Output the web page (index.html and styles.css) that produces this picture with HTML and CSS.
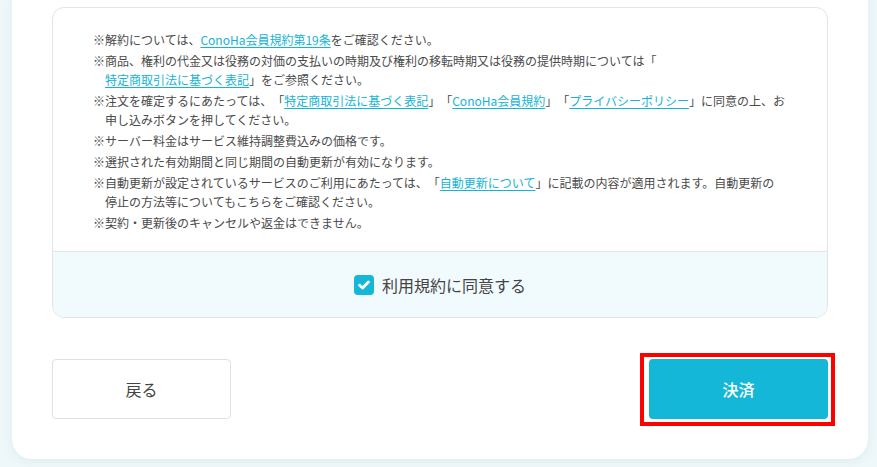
FILE: index.html
```html
<!DOCTYPE html>
<html lang="ja">
<head>
<meta charset="utf-8">
<link rel="stylesheet" href="styles.css">
</head>
<body>
<div class="page">
  <div class="card">
    <div class="terms">
      <ul class="notes">
        <li>※解約については、<a href="#">ConoHa会員規約第19条</a>をご確認ください。</li>
        <li>※商品、権利の代金又は役務の対価の支払いの時期及び権利の移転時期又は役務の提供時期については「<a class="nw" href="#">特定商取引法に基づく表記</a>」をご参照ください。</li>
        <li>※注文を確定するにあたっては、「<a href="#">特定商取引法に基づく表記</a>」「<a href="#">ConoHa会員規約</a>」「<a href="#">プライバシーポリシー</a>」に同意の上、お申し込みボタンを押してください。</li>
        <li>※サーバー料金はサービス維持調整費込みの価格です。</li>
        <li>※選択された有効期間と同じ期間の自動更新が有効になります。</li>
        <li>※自動更新が設定されているサービスのご利用にあたっては、「<a href="#">自動更新について</a>」に記載の内容が適用されます。自動更新の停止の方法等についてもこちらをご確認ください。</li>
        <li>※契約・更新後のキャンセルや返金はできません。</li>
      </ul>
      <div class="agree">
        <label class="check">
          <span class="box"><svg width="12" height="10" viewBox="0 0 12 10"><path d="M1.6 5.2 L4.6 8 L10.4 2" fill="none" stroke="#fff" stroke-width="2.8" stroke-linecap="round" stroke-linejoin="round"/></svg></span>
          <span class="label">利用規約に同意する</span>
        </label>
      </div>
    </div>
    <div class="actions">
      <button class="btn back">戻る</button>
      <button class="btn pay">決済<span class="mark"></span></button>
    </div>
  </div>
</div>
</body>
</html>
```

FILE: styles.css
```css
* { box-sizing: border-box; }
html, body { margin: 0; padding: 0; }
body {
  background: #eef7f9;
  font-family: "Noto Sans CJK JP", "Noto Sans", sans-serif;
  color: #4a4a4a;
  overflow: hidden;
  height: 467px;
  text-spacing-trim: space-all;
}
.page {
  padding: 0 9px 0 12px;
}
.card {
  margin-top: -20px;
  background: #fff;
  border-radius: 20px;
  padding: 27px 40px 40px;
  box-shadow: 0 2px 10px rgba(120, 180, 195, 0.15);
}
.terms {
  border: 1px solid #e2e4e6;
  border-radius: 12px;
  overflow: hidden;
}
.notes {
  list-style: none;
  margin: 0;
  padding: 22px 41px 19px 40px;
  font-size: 12px;
  line-height: 19px;
  line-break: loose;
}
.notes li {
  padding-left: 12px;
  text-indent: -12px;
  margin-bottom: 2px;
}
.notes li:last-child { margin-bottom: 0; }
.notes a {
  color: #14b4d6;
  text-decoration: underline;
  text-underline-offset: 2px;
}
.notes a.nw {
  display: inline-block;
  text-indent: 0;
}
.agree {
  border-top: 1px solid #e2e6e8;
  background: #f1fafc;
  height: 66px;
  display: flex;
  align-items: center;
  justify-content: center;
}
.check {
  display: flex;
  align-items: center;
  gap: 8px;
}
.box {
  width: 20px;
  height: 20px;
  border-radius: 4px;
  background: #16b6d7;
  display: flex;
  align-items: center;
  justify-content: center;
}
.label {
  font-size: 16px;
  color: #444;
  line-height: 20px;
}
.actions {
  margin-top: 41px;
  display: flex;
  justify-content: space-between;
}
.btn {
  width: 179px;
  height: 60px;
  border-radius: 4px;
  font-family: "Noto Sans CJK JP", "Noto Sans", sans-serif;
  font-size: 16px;
  cursor: pointer;
}
.back {
  background: #fff;
  border: 1px solid #dfe1e3;
  color: #444;
}
.pay {
  position: relative;
  background: #15b7d8;
  border: none;
  color: #fff;
  font-weight: 500;
}
.mark {
  position: absolute;
  left: -9px;
  top: -6px;
  width: 195px;
  height: 73px;
  border: 4px solid #ff0000;
  pointer-events: none;
}
```
